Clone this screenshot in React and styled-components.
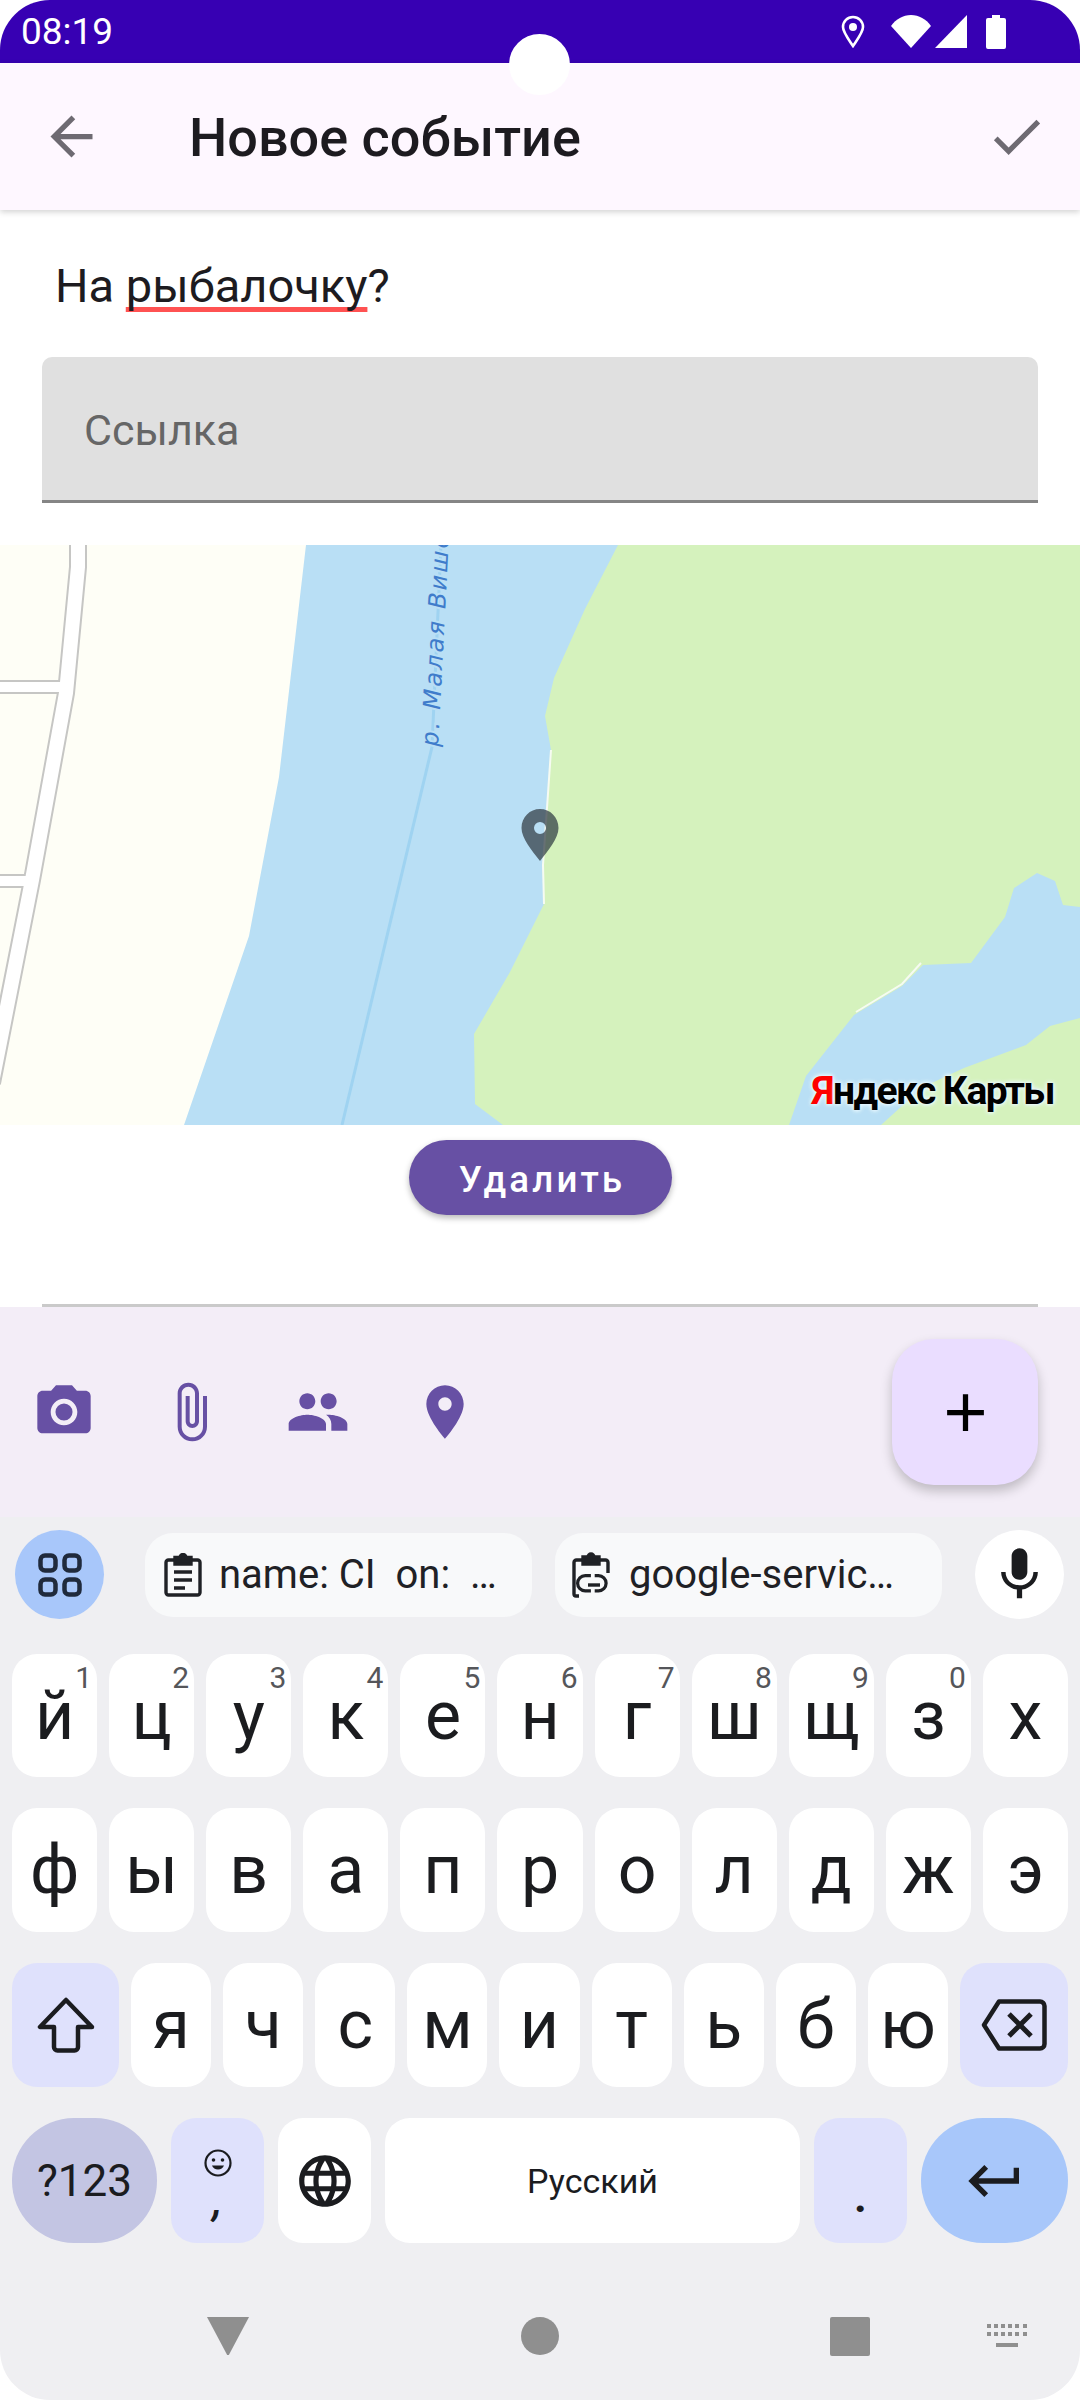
import styled, { createGlobalStyle } from 'styled-components';

const GlobalStyle = createGlobalStyle`
    html, body {
        margin: 0;
        padding: 0;
        background: #fff;
    }
    * {
        box-sizing: border-box;
    }
`;

const Screen = styled.div`
    position: relative;
    display: flex;
    flex-direction: column;
    width: 1080px;
    height: 2400px;
    overflow: hidden;
    border-radius: 50px;
    background: #fff;
    font-family: Roboto, sans-serif;
    color: #1d1b20;
`;

const StatusBar = styled.div`
    display: flex;
    align-items: center;
    justify-content: space-between;
    height: 63px;
    flex-shrink: 0;
    padding: 0 74px 0 21px;
    background: #3700b3;
    color: #fff;
`;

const Clock = styled.span`
    font-size: 37px;
    letter-spacing: 0;
`;

const StatusIcons = styled.div`
    display: flex;
    align-items: center;
`;

const StatusIcon = styled.svg`
    display: block;
    margin-left: ${({ $gap }) => $gap}px;
`;

const Camera = styled.div`
    position: absolute;
    left: 509px;
    top: 34px;
    width: 61px;
    height: 61px;
    border-radius: 50%;
    background: #fff;
    z-index: 5;
`;

const AppBar = styled.header`
    position: relative;
    z-index: 2;
    display: flex;
    align-items: center;
    height: 147px;
    flex-shrink: 0;
    padding: 0 32px 0 40px;
    background: #fef7ff;
    box-shadow: 0 2px 6px rgba(0, 0, 0, 0.18);
`;

const Title = styled.h1`
    flex: 1;
    margin: 0 0 0 86px;
    padding-top: 2px;
    font-size: 54px;
    font-weight: 500;
    line-height: 64px;
    color: #1d1b20;
`;

const Icon = styled.svg`
    display: block;
    flex-shrink: 0;
    fill: ${({ $color }) => $color || 'currentColor'};
`;

const Form = styled.main`
    display: flex;
    flex-direction: column;
    flex: 1;
    min-height: 0;
`;

const TitleInput = styled.div`
    margin: 48px 42px 0 55px;
    font-size: 47px;
    line-height: 56px;
    color: #1d1b20;
`;

const Misspelled = styled.span`
    text-decoration: underline;
    text-decoration-color: #ff5252;
    text-decoration-thickness: 5px;
    text-underline-offset: 5px;
    text-decoration-skip-ink: none;
`;

const LinkField = styled.div`
    display: flex;
    align-items: center;
    height: 146px;
    margin: 43px 42px 0;
    padding: 3px 42px 0;
    background: #e0e0e0;
    border-bottom: 3px solid #858585;
    border-radius: 10px 10px 0 0;
    font-size: 43px;
    color: #666;
`;

const MapBox = styled.div`
    position: relative;
    height: 580px;
    margin-top: 42px;
    overflow: hidden;
    flex-shrink: 0;
`;

const MapDrawing = styled.svg`
    display: block;
`;

const MapLogo = styled.div`
    position: absolute;
    right: 26px;
    bottom: 11px;
    font-size: 39px;
    font-weight: 700;
    letter-spacing: -1.6px;
    line-height: 46px;
    color: #000;
    text-shadow: 0 0 5px #eaf8ff, 0 0 5px #eaf8ff, 0 0 3px #eaf8ff;
`;

const LogoRed = styled.span`
    color: #f00;
`;

const DeleteRow = styled.div`
    display: flex;
    justify-content: center;
    margin-top: 15px;
`;

const DeleteButton = styled.button`
    width: 263px;
    height: 75px;
    padding: 3px 0 0 4px;
    border: 0;
    border-radius: 38px;
    background: #6750a4;
    color: #fff;
    font-family: inherit;
    font-size: 36.75px;
    font-weight: 500;
    letter-spacing: 3.1px;
    box-shadow: 0 3px 6px rgba(0, 0, 0, 0.28);
`;

const Divider = styled.div`
    height: 3px;
    margin: auto 42px 0;
    background: #cacaca;
`;

const BottomBar = styled.div`
    display: flex;
    align-items: center;
    height: 210px;
    flex-shrink: 0;
    padding: 0 42px 0 32px;
    background: #f3edf7;
    color: #6750a4;
`;

const ActionIcons = styled.div`
    display: flex;
    flex: 1;
    gap: 63px;
`;

const Fab = styled.button`
    display: flex;
    align-items: center;
    justify-content: center;
    width: 146px;
    height: 146px;
    padding: 0;
    border: 0;
    border-radius: 42px;
    background: #eaddff;
    color: #000;
    box-shadow: 0 6px 12px rgba(0, 0, 0, 0.22);
`;

const Keyboard = styled.section`
    display: flex;
    flex-direction: column;
    height: 883px;
    flex-shrink: 0;
    background: #efeff2;
    color: #1b1c1f;
`;

const Strip = styled.div`
    display: flex;
    align-items: center;
    height: 137px;
    padding: 0 16px 22px 15px;
`;

const RoundButton = styled.div`
    display: flex;
    align-items: center;
    justify-content: center;
    flex-shrink: 0;
    width: 89px;
    height: 89px;
    border-radius: 50%;
    background: ${({ $bg }) => $bg};
`;

const Chips = styled.div`
    display: flex;
    flex: 1;
    gap: 23px;
    margin-left: 41px;
`;

const Chip = styled.div`
    display: flex;
    align-items: center;
    gap: ${({ $gap }) => $gap}px;
    width: 387px;
    height: 84px;
    padding-left: ${({ $pad }) => $pad}px;
    border-radius: 28px;
    background: #f8f9fa;
    font-size: 40px;
    white-space: pre;
    color: #1f2125;
`;

const StripLine = styled.div`
    width: 2px;
    height: 74px;
    margin: 0 27px 0 6px;
    background: #c9cacd;
`;

const Rows = styled.div`
    display: flex;
    flex-direction: column;
    gap: 31px;
    padding: 0 12px;
`;

const Row = styled.div`
    display: flex;
    gap: ${({ $gap }) => $gap}px;
    height: ${({ $h }) => $h}px;
`;

const Key = styled.div`
    position: relative;
    display: flex;
    align-items: center;
    justify-content: center;
    flex: ${({ $w }) => ($w ? `0 0 ${$w}px` : '1 1 0')};
    min-width: 0;
    border-radius: ${({ $round }) => ($round ? '62px' : '25px')};
    background: ${({ $bg }) => $bg || '#fff'};
    font-size: ${({ $size }) => $size || 68}px;
    line-height: 1;
`;

const Hint = styled.span`
    position: absolute;
    top: 9px;
    right: 5px;
    font-size: 30px;
    line-height: 30px;
    color: #55565a;
`;

const EmojiKey = styled(Key)`
    flex-direction: column;
    gap: 6px;
    padding-top: 4px;
`;

const Comma = styled.span`
    font-size: 44px;
    line-height: 34px;
    font-weight: 500;
    font-style: italic;
`;

const Dot = styled.span`
    margin-top: 32px;
    font-size: 44px;
    font-weight: 700;
`;

const NavBar = styled.nav`
    display: flex;
    align-items: center;
    height: 40px;
    margin-top: 73px;
    padding-left: 207px;
`;

const Triangle = styled.div`
    width: 42px;
    height: 38px;
    background: #8f8f8f;
    clip-path: polygon(0 0, 100% 0, 52% 100%, 48% 100%);
`;

const Circle = styled.div`
    width: 38px;
    height: 38px;
    margin-left: 272px;
    border-radius: 50%;
    background: #8f8f8f;
`;

const Square = styled.div`
    width: 40px;
    height: 39px;
    margin-left: 271px;
    border-radius: 2px;
    background: #8f8f8f;
`;

const NavKeyboard = styled.svg`
    display: block;
    margin-left: 117px;
`;

const paths = {
    back: 'M20 11H7.83l5.59-5.59L12 4l-8 8 8 8 1.41-1.41L7.83 13H20v-2z',
    done: 'M9 16.2L4.8 12l-1.4 1.4L9 19 21 7l-1.4-1.4L9 16.2z',
    clip: 'M16.5 6v11.5c0 2.21-1.79 4-4 4s-4-1.79-4-4V5c0-1.38 1.12-2.5 2.5-2.5s2.5 1.12 2.5 2.5v10.5c0 .55-.45 1-1 1s-1-.45-1-1V6H10v9.5c0 1.38 1.12 2.5 2.5 2.5s2.5-1.12 2.5-2.5V5c0-2.21-1.79-4-4-4S7 2.79 7 5v12.5c0 3.04 2.46 5.5 5.5 5.5s5.5-2.46 5.5-5.5V6h-1.5z',
    people: 'M16 11c1.66 0 2.99-1.34 2.99-3S17.66 5 16 5c-1.66 0-3 1.34-3 3s1.34 3 3 3zm-8 0c1.66 0 2.99-1.34 2.99-3S9.66 5 8 5C6.34 5 5 6.34 5 8s1.34 3 3 3zm0 2c-2.33 0-7 1.17-7 3.5V19h14v-2.5c0-2.33-4.67-3.5-7-3.5zm8 0c-.29 0-.62.02-.97.05 1.16.84 1.97 1.97 1.97 3.45V19h6v-2.5c0-2.33-4.67-3.5-7-3.5z',
    place: 'M12 2C8.13 2 5 5.13 5 9c0 5.25 7 13 7 13s7-7.75 7-13c0-3.87-3.13-7-7-7zm0 9.5c-1.38 0-2.5-1.12-2.5-2.5s1.12-2.5 2.5-2.5 2.5 1.12 2.5 2.5-1.12 2.5-2.5 2.5z',
    camera: 'M9 2L7.17 4H4c-1.1 0-2 .9-2 2v12c0 1.1.9 2 2 2h16c1.1 0 2-.9 2-2V6c0-1.1-.9-2-2-2h-3.17L15 2H9zm3 15c-2.76 0-5-2.24-5-5s2.24-5 5-5 5 2.24 5 5-2.24 5-5 5zM12 15.2a3.2 3.2 0 1 0 0-6.4 3.2 3.2 0 0 0 0 6.4z',
    add: 'M19 13h-6v6h-2v-6H5v-2h6V5h2v6h6v2z',
    mic: 'M12 14c1.66 0 2.99-1.34 2.99-3L15 5c0-1.66-1.34-3-3-3S9 3.34 9 5v6c0 1.66 1.34 3 3 3zm5.3-3c0 3-2.54 5.1-5.3 5.1S6.7 14 6.7 11H5c0 3.41 2.72 6.23 6 6.72V21h2v-3.28c3.28-.48 6-3.3 6-6.72h-1.7z',
    globe: 'M11.99 2C6.47 2 2 6.48 2 12s4.47 10 9.99 10C17.52 22 22 17.52 22 12S17.52 2 11.99 2zm6.93 6h-2.95c-.32-1.25-.78-2.45-1.38-3.56 1.84.63 3.37 1.91 4.33 3.56zM12 4.04c.83 1.2 1.48 2.53 1.91 3.96h-3.82c.43-1.43 1.08-2.76 1.91-3.96zM4.26 14C4.1 13.36 4 12.69 4 12s.1-1.36.26-2h3.38c-.08.66-.14 1.32-.14 2 0 .68.06 1.34.14 2H4.26zm.82 2h2.95c.32 1.25.78 2.45 1.38 3.56-1.84-.63-3.37-1.9-4.33-3.56zm2.95-8H5.08c.96-1.66 2.49-2.93 4.33-3.56C8.81 5.55 8.35 6.75 8.03 8zM12 19.96c-.83-1.2-1.48-2.53-1.91-3.96h3.82c-.43 1.43-1.08 2.76-1.91 3.96zM14.34 14H9.66c-.09-.66-.16-1.32-.16-2 0-.68.07-1.35.16-2h4.68c.09.65.16 1.32.16 2 0 .68-.07 1.34-.16 2zm.25 5.56c.6-1.11 1.06-2.31 1.38-3.56h2.95c-.96 1.65-2.49 2.93-4.33 3.56zM16.36 14c.08-.66.14-1.32.14-2 0-.68-.06-1.34-.14-2h3.38c.16.64.26 1.31.26 2s-.1 1.36-.26 2h-3.38z',
    enter: 'M19 7v4H5.83l3.58-3.59L8 6l-6 6 6 6 1.41-1.41L5.83 13H21V7z',
};

const MaterialIcon = ({ name, size = 63, color }) => (
    <Icon viewBox="0 0 24 24" width={size} height={size} $color={color}>
        <path d={paths[name]} fillRule="evenodd" />
    </Icon>
);

const AppsIcon = () => (
    <svg width="44" height="44" viewBox="0 0 44 44" fill="none" stroke="#1f2a3c" strokeWidth="4.5">
        <rect x="2.5" y="2.5" width="15" height="15" rx="4.5" />
        <rect x="26.5" y="2.5" width="15" height="15" rx="4.5" />
        <rect x="2.5" y="26.5" width="15" height="15" rx="4.5" />
        <rect x="26.5" y="26.5" width="15" height="15" rx="4.5" />
    </svg>
);

const ClipboardIcon = () => (
    <svg width="38" height="44" viewBox="0 0 38 44" fill="none" stroke="#1f2125" strokeWidth="3.4">
        <path d="M11 7H4.5A2.5 2.5 0 0 0 2 9.5v30A2.5 2.5 0 0 0 4.5 42h29a2.5 2.5 0 0 0 2.5-2.5v-30A2.5 2.5 0 0 0 33.500 7H27" />
        <path d="M11 4.500h5a3 3 0 0 1 6 0h5V11H11z" fill="#1f2125" />
        <path d="M10 19h18M10 27h18M10 35h11" />
    </svg>
);

const ClipboardLinkIcon = () => (
    <svg width="40" height="46" viewBox="0 0 40 46" fill="none" stroke="#1f2125" strokeWidth="3.4">
        <path d="M11 8H4.500A2.500 2.500 0 0 0 2 10.500V42a2 2 0 0 0 2 2h3" />
        <path d="M27 8h6.500a2.500 2.500 0 0 1 2.500 2.500V21" />
        <path d="M11 5h5a3 3 0 0 1 6 0h5v7H11z" fill="#1f2125" />
        <path d="M22 27h-6a8 8 0 0 0 0 16h6M26 27h4a8 8 0 0 1 0 16h-4" transform="translate(-2 -2) scale(0.95)" />
        <path d="M17 33h12" transform="translate(-1 0)" />
    </svg>
);

const ShiftIcon = () => (
    <svg width="58" height="56" viewBox="0 0 58 56" fill="none" stroke="#1b1c1f" strokeWidth="4.5" strokeLinejoin="round">
        <path d="M29 3 3 30h14v20a3.500 3.500 0 0 0 3.500 3.500h17A3.500 3.500 0 0 0 41 50V30h14z" />
    </svg>
);

const BackspaceIcon = () => (
    <svg width="66" height="52" viewBox="0 0 66 52" fill="none" stroke="#1b1c1f" strokeWidth="4.5" strokeLinejoin="round">
        <path d="M18 2.500h41a4.500 4.500 0 0 1 4.500 4.500v38a4.500 4.500 0 0 1-4.500 4.500H18L3 26z" />
        <path d="M28 15l22 22M50 15 28 37" strokeWidth="5" />
    </svg>
);

const SmileIcon = () => (
    <svg width="28" height="28" viewBox="0 0 28 28" fill="none" stroke="#1b1c1f" strokeWidth="2.2">
        <circle cx="14" cy="14" r="12.500" />
        <circle cx="9.500" cy="11" r="1.800" fill="#1b1c1f" stroke="none" />
        <circle cx="18.500" cy="11" r="1.800" fill="#1b1c1f" stroke="none" />
        <path d="M8 16.500a6.500 6.500 0 0 0 12 0z" fill="#1b1c1f" stroke="none" />
    </svg>
);

const StatusIconsRow = () => (
    <StatusIcons>
        <StatusIcon width="24" height="33" viewBox="0 0 24 33" fill="none" stroke="#fff" strokeWidth="2.600">
            <path d="M12 31C6 22 2 17 2 12a10 10 0 0 1 20 0c0 5-4 10-10 19z" />
            <circle cx="12" cy="12" r="4" fill="#fff" stroke="none" />
        </StatusIcon>
        <StatusIcon $gap={26} width="40" height="33" viewBox="0 0 40 33" fill="#fff">
            <path d="M20 33 0 11C5 4 12 0 20 0s15 4 20 11z" />
        </StatusIcon>
        <StatusIcon $gap={4} width="33" height="33" viewBox="0 0 33 33" fill="#fff">
            <path d="M32 0v33H0z" />
        </StatusIcon>
        <StatusIcon $gap={18} width="20" height="34" viewBox="0 0 20 34" fill="#fff">
            <path d="M6 0h8v3h4a2 2 0 0 1 2 2v27a2 2 0 0 1-2 2H2a2 2 0 0 1-2-2V5a2 2 0 0 1 2-2h4z" />
        </StatusIcon>
    </StatusIcons>
);

const MapPicture = () => (
    <MapDrawing width="1080" height="580" viewBox="0 545 1080 580">
        <rect x="0" y="545" width="1080" height="580" fill="#fefef6" />
        <g fill="none" strokeLinejoin="miter">
            <g stroke="#c6c6c4" strokeWidth="18">
                <path d="M78 540V567L66 693 32 880-8 1083" />
                <path d="M0 687H62M0 881H32" strokeWidth="14" />
            </g>
            <g stroke="#fff" strokeWidth="14">
                <path d="M78 540V567L66 693 32 880-8 1083" />
                <path d="M0 687H66M0 881H36" strokeWidth="10" />
            </g>
        </g>
        <path
            d="M306 545 279 777 249 936 184 1125H1080V545z"
            fill="#b9dff5"
        />
        <path
            d="M618 545 585 609 554 678 545 716 551 750 547 808 543 865 544 904 510 972 474 1034 475 1104 503 1125H789L806 1076 854 1015 902 986 923 965 971 963 1005 917 1014 888 1037 873 1055 881 1063 905 1080 907V545z"
            fill="#d5f2bd"
        />
        <path d="M1080 1018 1050 1026 1026 1045 964 1068 923 1087 881 1125H1080z" fill="#d5f2bd" />
        <path d="M551 750 547 808 543 865 544 904" fill="none" stroke="#f6fbf2" strokeWidth="2" />
        <path d="M856 1012 902 984 921 963" fill="none" stroke="#f6fbf2" strokeWidth="2" />
        <path d="M441 545 432 747 342 1125" fill="none" stroke="#9fd3f1" strokeWidth="3" />
        <text
            transform="translate(438 747) rotate(-87)"
            fontFamily="'DejaVu Sans', sans-serif"
            fontStyle="italic"
            fontSize="24"
            letterSpacing="2.2"
            fill="#3f7ccb"
            stroke="#b9dff5"
            strokeWidth="4"
            paintOrder="stroke"
        >
            р. Малая Вишера
        </text>
        <path
            d="M540 809c-10 0-18.500 8-18.500 19 0 10 10.500 23 18.500 33 8-10 18.500-23 18.500-33 0-11-8.500-19-18.500-19zm0 13a6 6 0 1 1 0 12 6 6 0 0 1 0-12z"
            fill="#2f3a42"
            fillOpacity="0.72"
            fillRule="evenodd"
        />
    </MapDrawing>
);

const topRow = [['й', '1'], ['ц', '2'], ['у', '3'], ['к', '4'], ['е', '5'], ['н', '6'], ['г', '7'], ['ш', '8'], ['щ', '9'], ['з', '0'], ['х']];
const midRow = ['ф', 'ы', 'в', 'а', 'п', 'р', 'о', 'л', 'д', 'ж', 'э'];
const lowRow = ['я', 'ч', 'с', 'м', 'и', 'т', 'ь', 'б', 'ю'];

export default function App() {
    return (
        <Screen>
            <GlobalStyle />
            <StatusBar>
                <Clock>08:19</Clock>
                <StatusIconsRow />
            </StatusBar>
            <Camera />
            <AppBar>
                <MaterialIcon name="back" color="#6e6a72" />
                <Title>Новое событие</Title>
                <MaterialIcon name="done" color="#6e6a72" />
            </AppBar>
            <Form>
                <TitleInput>На <Misspelled>рыбалочку</Misspelled>?</TitleInput>
                <LinkField>Ссылка</LinkField>
                <MapBox>
                    <MapPicture />
                    <MapLogo><LogoRed>Я</LogoRed>ндекс Карты</MapLogo>
                </MapBox>
                <DeleteRow>
                    <DeleteButton>Удалить</DeleteButton>
                </DeleteRow>
                <Divider />
            </Form>
            <BottomBar>
                <ActionIcons>
                    <MaterialIcon name="camera" size={64} />
                    <MaterialIcon name="clip" size={64} />
                    <MaterialIcon name="people" size={64} />
                    <MaterialIcon name="place" size={64} />
                </ActionIcons>
                <Fab><MaterialIcon name="add" /></Fab>
            </BottomBar>
            <Keyboard>
                <Strip>
                    <RoundButton $bg="#a8c7fa"><AppsIcon /></RoundButton>
                    <Chips>
                        <Chip $pad={19} $gap={17}><ClipboardIcon />name: CI  on:  …</Chip>
                        <Chip $pad={17} $gap={17}><ClipboardLinkIcon />google-servic…</Chip>
                    </Chips>
                    <StripLine />
                    <RoundButton $bg="#fff"><MaterialIcon name="mic" /></RoundButton>
                </Strip>
                <Rows>
                    <Row $gap={12} $h={123}>
                        {topRow.map(([letter, hint]) => (
                            <Key key={letter}>{letter}{hint && <Hint>{hint}</Hint>}</Key>
                        ))}
                    </Row>
                    <Row $gap={12} $h={124}>
                        {midRow.map((letter) => <Key key={letter}>{letter}</Key>)}
                    </Row>
                    <Row $gap={12} $h={124}>
                        <Key $w={107} $bg="#dfe1fc"><ShiftIcon /></Key>
                        {lowRow.map((letter) => <Key key={letter}>{letter}</Key>)}
                        <Key $w={108} $bg="#dfe1fc"><BackspaceIcon /></Key>
                    </Row>
                    <Row $gap={14} $h={125}>
                        <Key $w={145} $round $bg="#c3c5e3" $size={44}>?123</Key>
                        <EmojiKey $w={93} $bg="#dfe1fc"><SmileIcon /><Comma>,</Comma></EmojiKey>
                        <Key $w={93}><MaterialIcon name="globe" size={62} /></Key>
                        <Key $size={34}>Русский</Key>
                        <Key $w={93} $bg="#dfe1fc" $size={44}><Dot>.</Dot></Key>
                        <Key $w={147} $round $bg="#a8c7fa"><MaterialIcon name="enter" size={64} /></Key>
                    </Row>
                </Rows>
                <NavBar>
                    <Triangle />
                    <Circle />
                    <Square />
                    <NavKeyboard width="41" height="24" viewBox="0 0 41 24" fill="#8f8f8f">
                        <path d="M0 0h4v4H0zM7 0h4v4H7zM14 0h4v4h-4zM21 0h4v4h-4zM28 0h4v4h-4zM36 0h4v4h-4zM0 8h4v4H0zM7 8h4v4H7zM14 8h4v4h-4zM21 8h4v4h-4zM28 8h4v4h-4zM36 8h4v4h-4zM9 19h22v4H9z" />
                    </NavKeyboard>
                </NavBar>
            </Keyboard>
        </Screen>
    );
}
